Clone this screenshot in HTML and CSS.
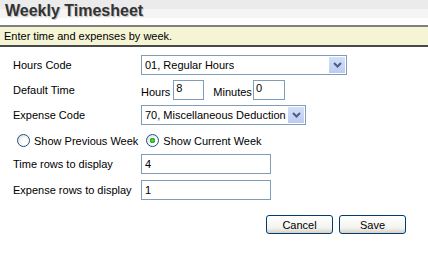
FILE: index.html
```html
<!DOCTYPE html>
<html lang="en">
<head>
    <meta charset="UTF-8">
    <title>Weekly Timesheet</title>
    <link rel="stylesheet" href="styles.css">
</head>
<body>
    <div class="title-bar">
        <h1>Weekly Timesheet</h1>
    </div>
    <div class="instructions">Enter time and expenses by week.</div>

    <form class="settings">
        <div class="row">
            <label class="field-label">Hours Code</label>
            <div class="combo combo-wide">
                <select>
                    <option>01, Regular Hours</option>
                </select>
                <span class="combo-arrow"><svg width="9" height="6" viewBox="0 0 9 6"><path d="M1 1 L4.5 4.5 L8 1" fill="none" stroke="#4d5f80" stroke-width="2"/></svg></span>
            </div>
        </div>
        <div class="row">
            <label class="field-label">Default Time</label>
            <div class="time-fields">
                <span class="unit">Hours</span>
                <input class="small-input" type="text" value="8">
                <span class="unit unit-gap">Minutes</span>
                <input class="small-input" type="text" value="0">
            </div>
        </div>
        <div class="row">
            <label class="field-label">Expense Code</label>
            <div class="combo combo-mid">
                <select>
                    <option>70, Miscellaneous Deduction</option>
                </select>
                <span class="combo-arrow"><svg width="9" height="6" viewBox="0 0 9 6"><path d="M1 1 L4.5 4.5 L8 1" fill="none" stroke="#4d5f80" stroke-width="2"/></svg></span>
            </div>
        </div>
        <div class="row radio-row">
            <label class="radio"><input type="radio" name="week"> Show Previous Week</label>
            <label class="radio"><input type="radio" name="week" checked> Show Current Week</label>
        </div>
        <div class="row">
            <label class="field-label">Time rows to display</label>
            <input class="text-input" type="text" value="4">
        </div>
        <div class="row">
            <label class="field-label">Expense rows to display</label>
            <input class="text-input" type="text" value="1">
        </div>
        <div class="buttons">
            <button type="button" class="btn">Cancel</button>
            <button type="button" class="btn">Save</button>
        </div>
    </form>
</body>
</html>
```

FILE: styles.css
```css
body {
    margin: 0;
    background: #ffffff;
    font-family: Tahoma, "DejaVu Sans", "Liberation Sans", sans-serif;
    font-size: 11px;
    color: #000000;
}

.title-bar {
    height: 25px;
    background: linear-gradient(#ebebeb 0, #ebebeb 9px, #f5f5f5 9px, #f5f5f5 18px, #ffffff 18px);
}
h1 {
    margin: 0;
    padding: 2px 0 0 5px;
    font-family: "Liberation Sans", Arial, sans-serif;
    font-size: 16px;
    font-weight: bold;
    color: #333333;
    line-height: 18px;
    text-shadow: 1px 1px 0 #c8c8c8;
}

.instructions {
    background: #f5f5d5;
    border-top: 2px solid #7f7f7f;
    border-bottom: 2px solid #4a4a4a;
    padding: 0 4px;
    height: 18px;
    line-height: 18px;
    font-family: "Liberation Sans", Arial, sans-serif;
    font-size: 11px;
}

.settings {
    padding: 8px 0 0 13px;
    font-family: "Liberation Sans", Arial, sans-serif;
}

.row {
    display: flex;
    align-items: center;
    margin-bottom: 5px;
}
.field-label {
    width: 128px;
    flex: none;
}

.combo {
    position: relative;
    height: 20px;
}
.combo-wide { width: 206px; }
.combo-mid { width: 165px; }
.combo select {
    appearance: none;
    -webkit-appearance: none;
    box-sizing: border-box;
    width: 100%;
    height: 20px;
    border: 1px solid #7f9db9;
    background: #ffffff;
    font: 11px "Liberation Sans", Arial, sans-serif;
    padding: 0 3px;
    color: #000000;
}
.combo-arrow {
    position: absolute;
    top: 2px;
    right: 2px;
    width: 16px;
    height: 16px;
    background: linear-gradient(#d4e0fb, #bccbf1);
    display: flex;
    align-items: center;
    justify-content: center;
}

.time-fields {
    display: flex;
    align-items: center;
    height: 20px;
}
.unit {
    padding-top: 3px;
    margin-right: 3px;
}
.unit-gap {
    margin-left: 9px;
    margin-right: 1px;
}
.small-input {
    box-sizing: border-box;
    width: 31px;
    height: 20px;
    border: 1px solid #7f9db9;
    font: 11px "Liberation Sans", Arial, sans-serif;
    padding: 0 2px 4px;
}
.time-fields .small-input + .unit-gap + .small-input {
    width: 32px;
}

.radio-row {
    padding-left: 4px;
    gap: 8px;
    margin-top: 9px;
    margin-bottom: 6px;
}
.radio {
    display: flex;
    align-items: center;
}
.radio input {
    appearance: none;
    -webkit-appearance: none;
    width: 13px;
    height: 13px;
    margin: 0 4px 0 0;
    border: 1px solid #1c5180;
    border-radius: 50%;
    background: radial-gradient(circle at 65% 65%, #ffffff 30%, #d8d8d0 100%);
    box-sizing: border-box;
}
.radio input:checked {
    background: radial-gradient(circle, #5ee05e 0, #21a121 2.5px, transparent 3px),
        radial-gradient(circle at 65% 65%, #ffffff 30%, #d8d8d0 100%);
}

.text-input {
    box-sizing: border-box;
    width: 130px;
    height: 20px;
    border: 1px solid #7f9db9;
    font: 11px "Liberation Sans", Arial, sans-serif;
    padding: 0 3px;
}
.row + .row .text-input {
    margin-top: 1px;
}

.buttons {
    display: flex;
    justify-content: flex-end;
    gap: 6px;
    width: 393px;
    margin-top: 15px;
}
.btn {
    width: 67px;
    height: 19px;
    border: 1px solid #003c74;
    border-radius: 3px;
    background: linear-gradient(#ffffff, #f3f3ef 70%, #d6d0c5);
    font: 11px "Liberation Sans", Arial, sans-serif;
    color: #000000;
    padding: 0;
}
```
